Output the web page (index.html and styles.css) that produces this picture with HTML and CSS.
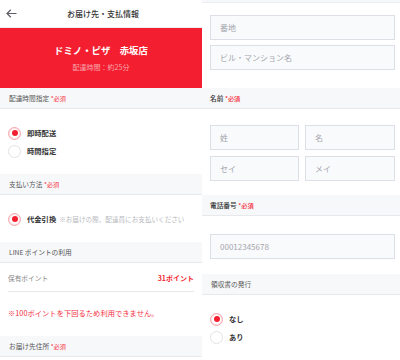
FILE: index.html
```html
<!DOCTYPE html>
<html lang="ja">
<head>
<meta charset="utf-8">
<link rel="stylesheet" href="styles.css">
</head>
<body>
<div class="screens">
  <div class="panel left">
    <div class="topbar">
      <svg class="back" width="11" height="9" viewBox="0 0 11 9"><path d="M10.5 4.5H1.2M4.8 0.8L1 4.5l3.8 3.7" fill="none" stroke="#5c5c66" stroke-width="1.2"/></svg>
      <div class="title">お届け先・支払情報</div>
    </div>
    <div class="banner">
      <div class="shop">ドミノ・ピザ　赤坂店</div>
      <div class="eta">配達時間：約25分</div>
    </div>
    <div class="sec-head">配達時間指定 <span class="req">*必須</span></div>
    <div class="radios r1">
      <div class="radio-row"><span class="radio on"></span><span class="rlabel">即時配送</span></div>
      <div class="radio-row"><span class="radio"></span><span class="rlabel">時間指定</span></div>
    </div>
    <div class="sec-head">支払い方法 <span class="req">*必須</span></div>
    <div class="radios r2">
      <div class="radio-row"><span class="radio on"></span><span class="rlabel">代金引換</span><span class="hint">※お届けの際、配達員にお支払いください</span></div>
    </div>
    <div class="sec-head">LINE ポイントの利用</div>
    <div class="points">
      <div class="pt-row"><span class="pt-label">保有ポイント</span><span class="pt-val">31ポイント</span></div>
      <div class="pt-msg">※100ポイントを下回るため利用できません。</div>
    </div>
    <div class="sec-head">お届け先住所 <span class="req">*必須</span></div>
  </div>
  <div class="panel right">
    <div class="topstrip"></div>
    <div class="fields f1">
      <div class="input">番地</div>
      <div class="input">ビル・マンション名</div>
    </div>
    <div class="sec-head dark">名前 <span class="req">*必須</span></div>
    <div class="fields f2">
      <div class="grid2">
        <div class="input">姓</div>
        <div class="input">名</div>
        <div class="input">セイ</div>
        <div class="input">メイ</div>
      </div>
    </div>
    <div class="sec-head dark">電話番号 <span class="req">*必須</span></div>
    <div class="fields f3">
      <div class="input">00012345678</div>
    </div>
    <div class="sec-head">領収書の発行</div>
    <div class="radios r3">
      <div class="radio-row"><span class="radio on"></span><span class="rlabel">なし</span></div>
      <div class="radio-row"><span class="radio"></span><span class="rlabel">あり</span></div>
    </div>
  </div>
</div>
</body>
</html>
```
FILE: styles.css
```css
* { box-sizing: border-box; }
html, body { margin: 0; padding: 0; background: #fff; }
body {
  font-family: "Noto Sans CJK JP", "Noto Sans", sans-serif;
  color: #333;
  width: 400px;
  height: 360px;
  overflow: hidden;
}
.screens { display: flex; width: 400px; height: 360px; }
.panel { display: flex; flex-direction: column; overflow: hidden; }
.left { width: 202px; }
.right { flex: 1; }

.topbar {
  height: 28px;
  position: relative;
  display: flex;
  align-items: center;
  justify-content: center;
  border-bottom: 1px solid #eceef1;
}
.back { position: absolute; left: 6px; top: 9px; }
.title { font-size: 8px; line-height: 10px; font-weight: 500; color: #333; margin-left: 4px; }

.banner {
  height: 60px;
  background: #f31f30;
  display: flex;
  flex-direction: column;
  align-items: center;
  justify-content: center;
  color: #fff;
}
.shop { font-size: 9.4px; line-height: 12px; font-weight: 700; margin-top: 0; }
.eta { font-size: 7px; line-height: 9px; color: #f8a5ad; margin-top: 7px; }

.sec-head {
  height: 21px;
  background: #f7f8fa;
  border-bottom: 1px solid #e7e9ed;
  display: flex;
  align-items: center;
  padding-left: 9px;
  font-size: 6.7px;
  color: #555;
  white-space: pre;
}
.sec-head.dark { color: #333; font-weight: 500; padding-left: 8px; }
.req { color: #f5303f; font-size: 6.2px; }

.radios { display: flex; flex-direction: column; padding-left: 8px; }
.r1 { height: 65px; padding-top: 15px; }
.r2 { height: 47px; padding-top: 15px; }
.r3 { flex: 1; padding-top: 15px; }
.radio-row { height: 18px; display: flex; align-items: center; }
.radio {
  width: 13px;
  height: 13px;
  border-radius: 50%;
  border: 1px solid #e3e3e3;
  background: #fff;
  display: flex;
  align-items: center;
  justify-content: center;
  flex: none;
}
.radio.on { border-color: #f7a3aa; box-shadow: inset 0 0 0 1px #fde3e5; }
.radio.on::after {
  content: "";
  width: 6px;
  height: 6px;
  border-radius: 50%;
  background: #f31f30;
}
.rlabel { margin-left: 6px; font-size: 7.3px; font-weight: 700; color: #333; }
.hint { margin-left: 3px; font-size: 6.6px; color: #b8b9be; white-space: nowrap; }

.points { height: 73px; display: flex; flex-direction: column; padding: 0 8px; }
.pt-row {
  height: 29px;
  display: flex;
  align-items: center;
  justify-content: space-between;
  border-bottom: 1px solid #e6e8ec;
  padding-top: 2px;
}
.pt-label { font-size: 6.7px; color: #888; }
.pt-val { font-size: 7px; font-weight: 700; color: #f31f30; }
.pt-msg { margin-top: 16px; font-size: 7.3px; color: #f3303f; white-space: nowrap; }

.topstrip { height: 3px; background: #f7f8fa; border-bottom: 1px solid #eceef1; }
.fields { display: flex; flex-direction: column; gap: 5px; padding: 0 5px 0 8px; }
.f1 { height: 85px; padding-top: 12px; }
.f2 { height: 86px; padding-top: 16px; }
.f3 { height: 58px; padding-top: 18px; }
.grid2 { display: grid; grid-template-columns: 89px 90px; column-gap: 6px; row-gap: 6px; }
.input {
  height: 25px;
  background: #f9fafc;
  border: 1px solid #dcdfe5;
  display: flex;
  align-items: center;
  padding-left: 9px;
  font-size: 8px;
  color: #a4a6ad;
}
```
